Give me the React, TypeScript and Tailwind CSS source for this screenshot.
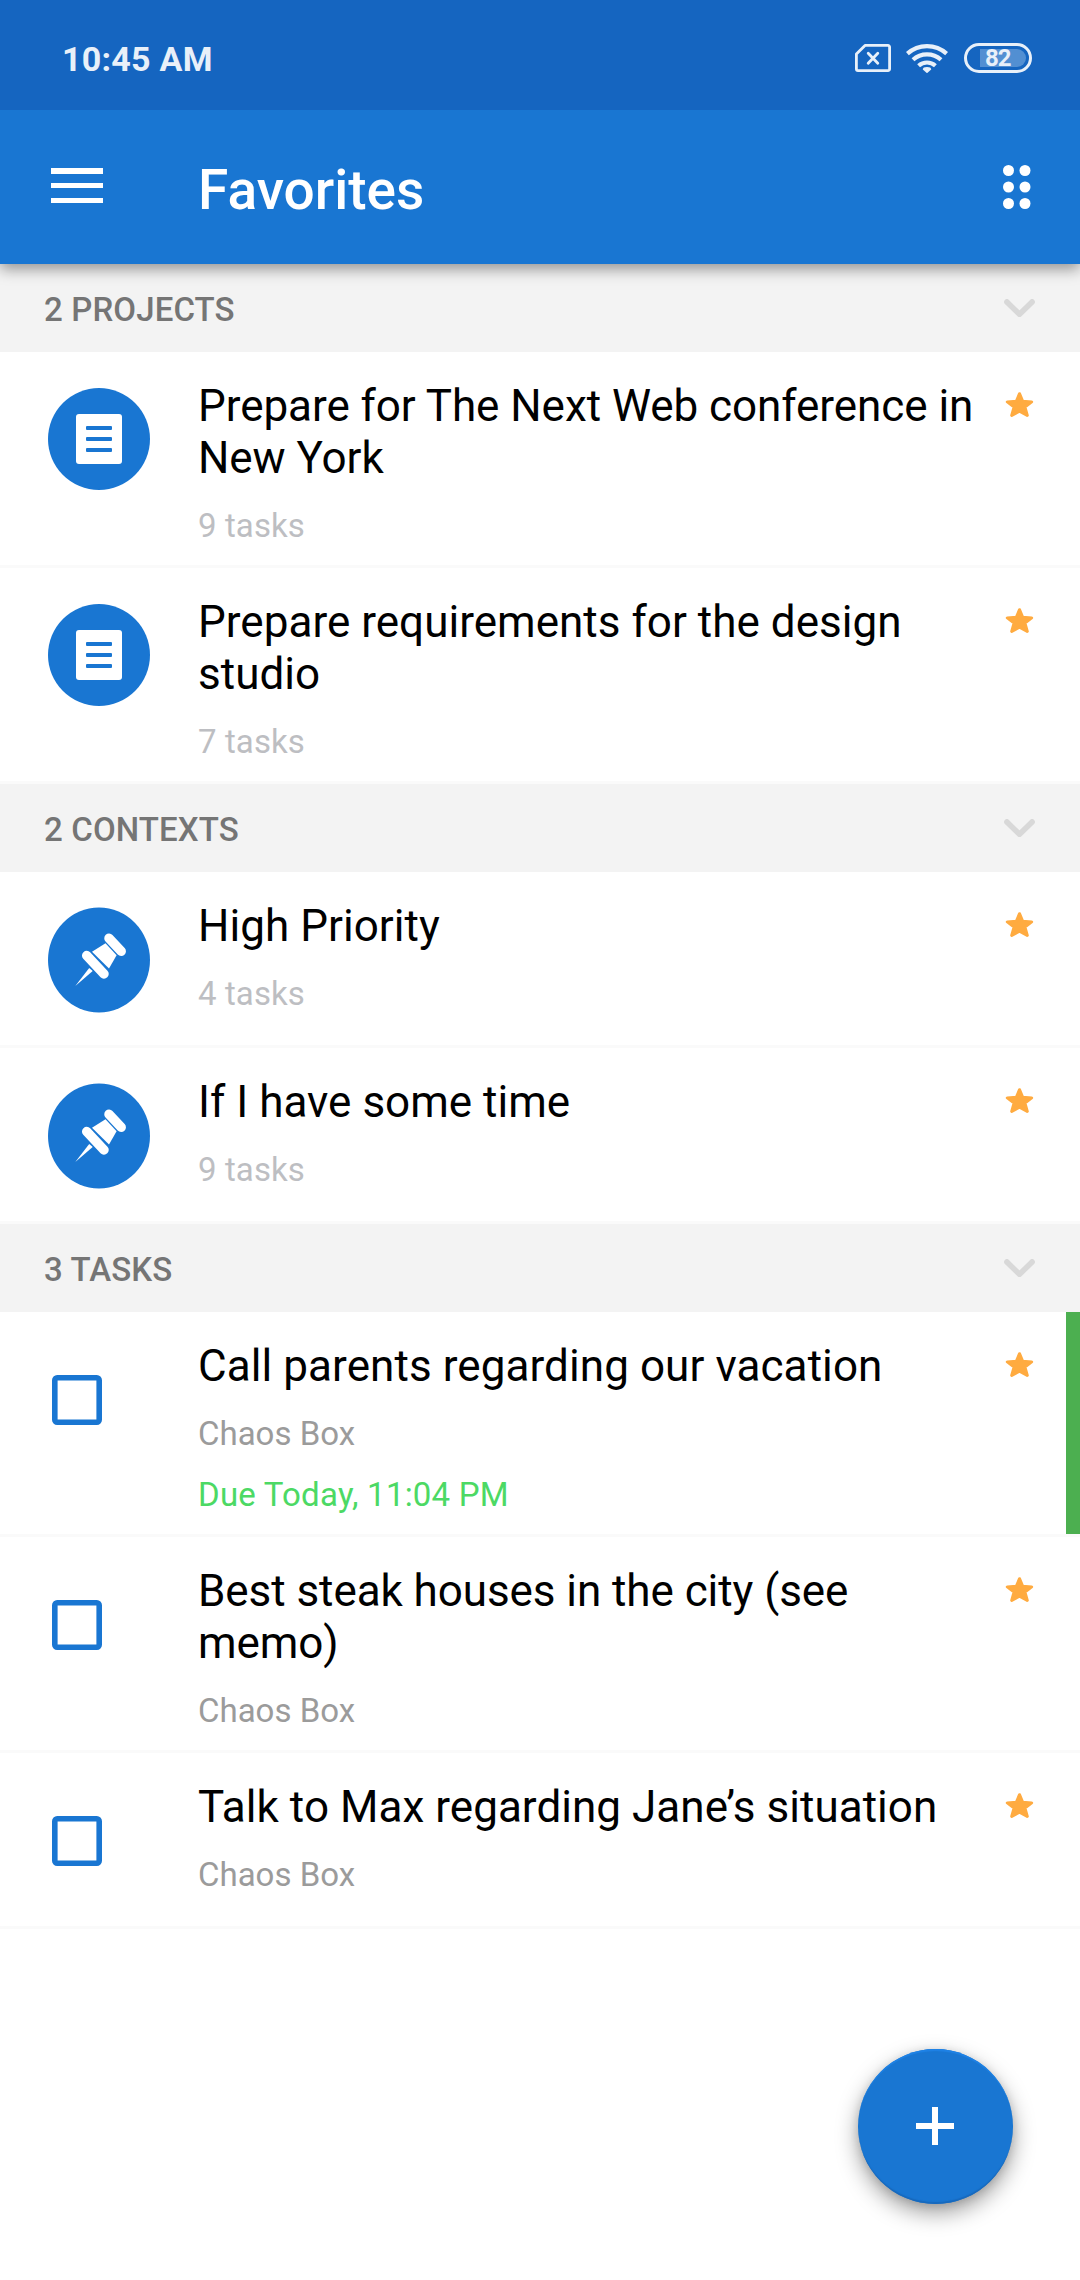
import React from "react";

type Kind = "project" | "context" | "task";

interface Item {
  title: string;
  sub: string;
  due?: string;
  height: string;
  tracking?: string;
}

interface Section {
  label: string;
  kind: Kind;
  items: Item[];
}

const sections: Section[] = [
  {
    label: "2 PROJECTS",
    kind: "project",
    items: [
      { title: "Prepare for The Next Web conference in New York", sub: "9 tasks", height: "h-[216px]", tracking: "tracking-[-0.05px]" },
      { title: "Prepare requirements for the design studio", sub: "7 tasks", height: "h-[216px]", tracking: "tracking-[0.03px]" },
    ],
  },
  {
    label: "2 CONTEXTS",
    kind: "context",
    items: [
      { title: "High Priority", sub: "4 tasks", height: "h-44", tracking: "tracking-[0.05px]" },
      { title: "If I have some time", sub: "9 tasks", height: "h-44", tracking: "tracking-[0.02px]" },
    ],
  },
  {
    label: "3 TASKS",
    kind: "task",
    items: [
      { title: "Call parents regarding our vacation", sub: "Chaos Box", due: "Due Today, 11:04 PM", height: "h-[225px]", tracking: "tracking-[0.08px]" },
      { title: "Best steak houses in the city (see memo)", sub: "Chaos Box", height: "h-[216px]", tracking: "tracking-[-0.07px]" },
      { title: "Talk to Max regarding Jane’s situation", sub: "Chaos Box", height: "h-44", tracking: "tracking-[0.04px]" },
    ],
  },
];

function StatusBar() {
  return (
    <div className="relative z-20 flex h-[110px] items-start justify-between bg-[#1565c0] pl-[62px] pr-12 text-[#e8f0f9]">
      <div className="mt-[39px] text-[34px] leading-[40px] font-bold tracking-[0.25px] whitespace-nowrap">10:45 AM</div>
      <div className="mt-[43px] flex h-[30px]">
        <svg className="mt-px h-7 w-9" viewBox="0 0 36 28" fill="none" stroke="currentColor">
          <path d="M10 1.4H33a1.6 1.6 0 0 1 1.6 1.6V25a1.6 1.6 0 0 1-1.6 1.6H3A1.6 1.6 0 0 1 1.4 25V10Z" strokeWidth="2.8" strokeLinejoin="round" />
          <path d="M13.2 9.2l9.6 10M22.8 9.2l-9.6 10" strokeWidth="2.8" strokeLinecap="round" />
        </svg>
        <svg className="ml-[15px] h-[30px] w-[42px]" viewBox="0 0 42 30" fill="none" stroke="currentColor" strokeWidth="4.2">
          <path d="M1.4 10.6a29.2 29.2 0 0 1 39.2 0" />
          <path d="M7 16.8a20.8 20.8 0 0 1 28 0" />
          <path d="M12.6 22.7a12.6 12.6 0 0 1 16.8 0" />
          <path d="M16.8 26.6q-.2-2.7 4.2-2.7t4.2 2.7L21 30.2Z" fill="currentColor" stroke="none" />
        </svg>
        <div className="ml-4 flex h-[30px] w-[68px] rounded-full border-[3px] border-[#e8f0f9] py-[3px] pr-[3px] pl-[13px]">
          <div className="flex h-[18px] w-[46px] items-center rounded-l-[2px] rounded-r-full bg-[#528fd2] pl-[5px] text-[24px] leading-[18px] font-bold tracking-[-1px]">
            <span>82</span>
          </div>
        </div>
      </div>
    </div>
  );
}

function Toolbar() {
  return (
    <header className="relative z-10 flex h-[154px] bg-[#1976d2] pl-[51px] pr-[49px] text-white shadow-[0_5px_14px_rgba(0,0,0,0.4)]">
      <div className="mt-[58px] flex h-[35px] w-[52px] flex-col justify-between">
        <span className="h-[5.5px] bg-white" />
        <span className="h-[5.5px] bg-white" />
        <span className="h-[5.5px] bg-white" />
      </div>
      <h1 className="mt-12 ml-[95px] flex-1 text-[55px] leading-[64px] font-medium">Favorites</h1>
      <svg className="mt-[55px] h-11 w-7" viewBox="0 0 28 44" fill="white">
        {[5.5, 22, 38.5].map((cy) => (
          <g key={cy}>
            <circle cx="5.5" cy={cy} r="5.5" />
            <circle cx="22" cy={cy} r="5.5" />
          </g>
        ))}
      </svg>
    </header>
  );
}

function Chevron() {
  return (
    <svg className="h-[18px] w-[31px]" viewBox="0 0 31 18" fill="none" stroke="#d8d8d8" strokeWidth="5.6" strokeLinecap="round" strokeLinejoin="round">
      <path d="M2.9 2.9L15.5 15.3L28.1 2.9" />
    </svg>
  );
}

function Star() {
  return (
    <svg className="mt-10 h-[25px] w-7 shrink-0 overflow-visible" viewBox="-0.5 0 28 25" fill="#ffab40" stroke="#ffab40" strokeWidth="3" strokeLinejoin="round">
      <path d="M14 1.7L17.2 9.3L26.2 9.9L19.4 15L21.8 23.4L14 19.2L6.2 23.4L8.6 15L1.8 9.9L10.8 9.3Z" />
    </svg>
  );
}

function ProjectIcon() {
  return (
    <div className="mt-[35.5px] flex h-[102px] w-[102px] items-center justify-center rounded-full bg-[#1976d2]">
      <div className="flex h-[50px] w-[46px] flex-col items-center justify-center gap-[7px] rounded-[3px] bg-white">
        <span className="h-1 w-[26px] rounded-[1px] bg-[#1976d2]" />
        <span className="h-1 w-[26px] rounded-[1px] bg-[#1976d2]" />
        <span className="h-1 w-[26px] rounded-[1px] bg-[#1976d2]" />
      </div>
    </div>
  );
}

function PinIcon() {
  return (
    <svg className="mt-[35px] h-[106px] w-[102px]" viewBox="0 0 102 106" fill="white">
      <ellipse cx="51" cy="53" rx="51" ry="52.4" fill="#1976d2" />
      <path d="M61 31.3L73.2 44.3" stroke="white" strokeWidth="9.5" strokeLinecap="round" />
      <path d="M38.7 48.6L56 66.9" stroke="white" strokeWidth="9.5" strokeLinecap="round" />
      <path d="M57.5 36.3L68.6 48.3L61 61.5L44 44.7Z" />
      <path d="M41.2 60.9L44.7 63.9L27.3 78.9Z" />
    </svg>
  );
}

function Leading({ kind }: { kind: Kind }) {
  return (
    <div className="w-[198px] shrink-0 pl-12">
      {kind === "project" && <ProjectIcon />}
      {kind === "context" && <PinIcon />}
      {kind === "task" && (
        <svg className="mt-[63px] ml-1 size-[50px]" viewBox="0 0 50 50" fill="none" stroke="#1976d2" strokeWidth="5.6">
          <rect x="2.8" y="2.8" width="44.4" height="44.4" rx="2.4" />
        </svg>
      )}
    </div>
  );
}

function Row({ item, kind }: { item: Item; kind: Kind }) {
  return (
    <div className={`relative flex border-b-[3px] border-[#fafafa] bg-white ${item.height}`}>
      <Leading kind={kind} />
      <div className="w-[807px] shrink-0 pt-7 pr-6">
        <div className={`text-[44px] leading-[52px] text-black ${item.tracking ?? ""}`}>{item.title}</div>
        <div className={`mt-[22px] text-[33px] leading-[40px] ${kind === "task" ? "text-[#9b9b9b]" : "tracking-[0.1px] text-[#bdbec2]"}`}>
          {item.sub}
        </div>
        {item.due && (
          <div className="mt-[21px] text-[33px] leading-[40px] tracking-[0.22px] text-[#4cd964]">{item.due}</div>
        )}
      </div>
      <Star />
      {item.due && <div className="absolute inset-y-0 right-0 w-[14px] bg-[#4caf50]" />}
    </div>
  );
}

export default function App() {
  return (
    <div className="relative h-[2280px] w-[1080px] overflow-hidden bg-white font-['Roboto',sans-serif]">
      <StatusBar />
      <Toolbar />
      <main>
        {sections.map((s) => (
          <section key={s.label}>
            <div className="flex h-[88px] items-center justify-between bg-[#f3f3f3] pr-[45px] pl-11">
              <h2 className="pt-[3px] text-[33px] leading-[40px] font-medium tracking-[0.13px] text-[#757575]">{s.label}</h2>
              <Chevron />
            </div>
            {s.items.map((item) => (
              <Row key={item.title} item={item} kind={s.kind} />
            ))}
          </section>
        ))}
      </main>
      <button
        aria-label="Add"
        className="absolute right-[67px] bottom-[76.5px] flex size-[155px] items-center justify-center rounded-full bg-[#1976d2] shadow-[0_9px_22px_rgba(0,0,0,0.38),0_2px_8px_rgba(0,0,0,0.12),inset_0_3px_1px_-1px_#1e82e6,inset_0_-3px_1px_-1px_#1769bd]"
      >
        <svg className="mr-px size-[38px]" viewBox="0 0 38 38" stroke="white" strokeWidth="6">
          <path d="M19 0V38M0 19H38" />
        </svg>
      </button>
    </div>
  );
}
